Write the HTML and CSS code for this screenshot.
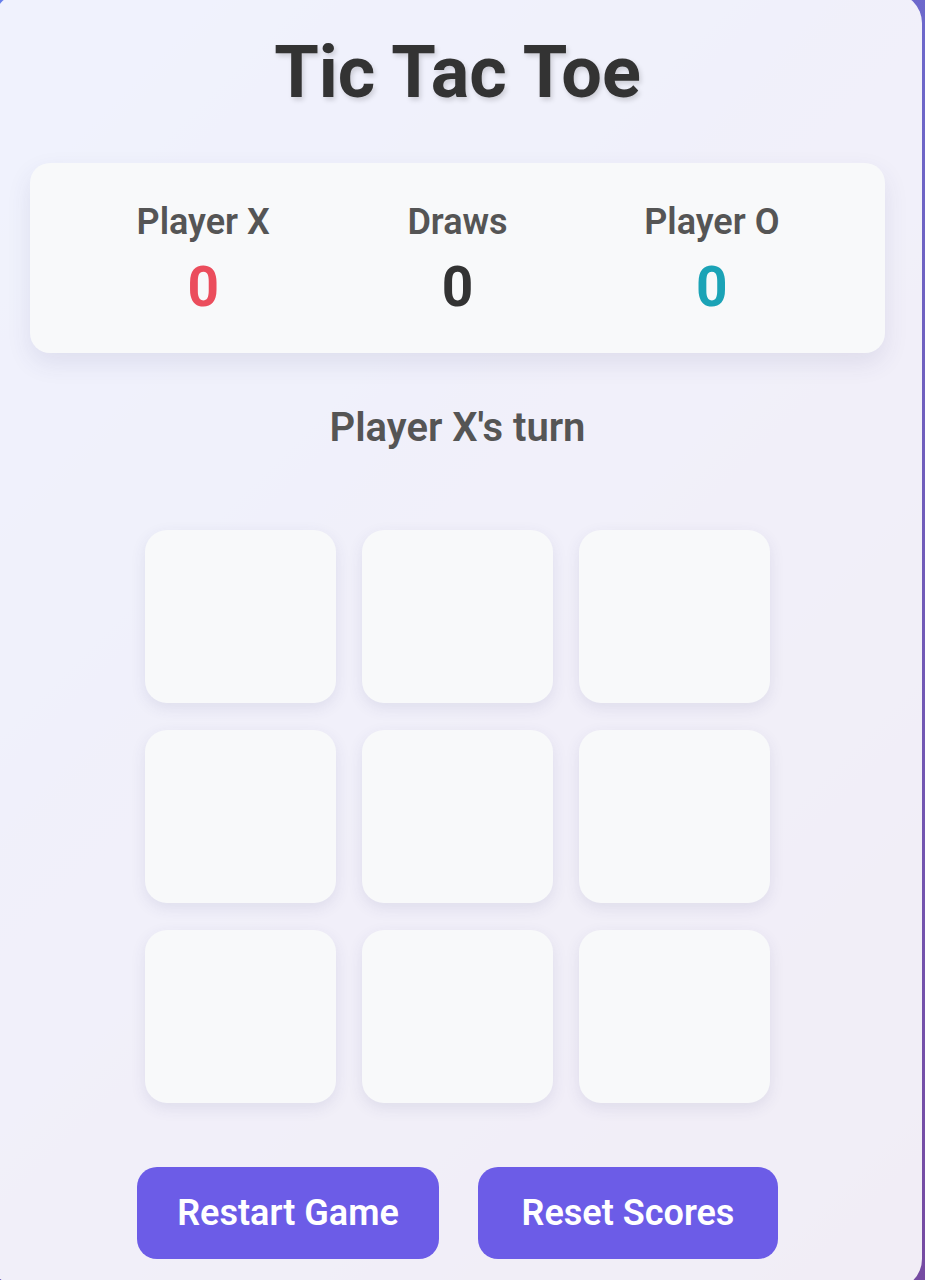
FILE: index.html
```html
<!DOCTYPE html>
<html lang="en">
<head>
<meta charset="utf-8">
<title>Tic Tac Toe</title>
<link rel="stylesheet" href="styles.css">
</head>
<body>
<main class="card">
  <h1 class="title">Tic Tac Toe</h1>
  <section class="scores">
    <div class="score-col">
      <div class="score-label">Player X</div>
      <div class="score-value score-x">0</div>
    </div>
    <div class="score-col">
      <div class="score-label">Draws</div>
      <div class="score-value score-draw">0</div>
    </div>
    <div class="score-col">
      <div class="score-label">Player O</div>
      <div class="score-value score-o">0</div>
    </div>
  </section>
  <p class="status">Player X's turn</p>
  <div class="board">
    <button class="cell"></button>
    <button class="cell"></button>
    <button class="cell"></button>
    <button class="cell"></button>
    <button class="cell"></button>
    <button class="cell"></button>
    <button class="cell"></button>
    <button class="cell"></button>
    <button class="cell"></button>
  </div>
  <div class="actions">
    <button class="btn btn-restart">Restart Game</button>
    <button class="btn btn-reset">Reset Scores</button>
  </div>
</main>
</body>
</html>
```
FILE: styles.css
```css
html, body {
  margin: 0;
  padding: 0;
}
body {
  width: 925px;
  height: 1280px;
  overflow: hidden;
  background: linear-gradient(135deg, #667eea 0%, #764ba2 100%);
  font-family: Roboto, "Noto Sans", sans-serif;
}
.card {
  box-sizing: border-box;
  width: 929px;
  height: 1296px;
  margin: -7px 0 0 -7px;
  background: rgba(255, 255, 255, 0.9);
  border-radius: 30px;
  display: flex;
  flex-direction: column;
  align-items: center;
  padding-top: 37px;
}
.title {
  margin: 0;
  font-size: 72px;
  line-height: 86px;
  font-weight: 700;
  color: #333333;
  text-shadow: 2px 3px 5px rgba(0, 0, 0, 0.15);
}
.scores {
  box-sizing: border-box;
  margin-top: 47px;
  width: 855px;
  height: 190px;
  background: #f8f9fa;
  border-radius: 20px;
  box-shadow: 0 10px 25px rgba(60, 60, 120, 0.1);
  display: grid;
  grid-template-columns: repeat(3, 1fr);
  padding: 38px 46px 0;
}
.score-col {
  display: flex;
  flex-direction: column;
  align-items: center;
}
.score-label {
  font-size: 36px;
  line-height: 43px;
  font-weight: 600;
  color: #555555;
}
.score-value {
  margin-top: 10px;
  font-size: 55px;
  line-height: 66px;
  font-weight: 700;
}
.score-x { color: #eb4d5c; }
.score-draw { color: #333333; }
.score-o { color: #1ba3b6; }
.status {
  margin: 51px 0 0;
  font-size: 40px;
  line-height: 47px;
  font-weight: 600;
  color: #555555;
}
.board {
  margin-top: 79px;
  display: grid;
  grid-template-columns: repeat(3, 191px);
  grid-template-rows: repeat(3, 173px);
  column-gap: 26px;
  row-gap: 27px;
}
.cell {
  border: none;
  padding: 0;
  background: #f8f9fa;
  border-radius: 22px;
  box-shadow: 0 5px 15px rgba(60, 60, 120, 0.1);
}
.actions {
  margin-top: 64px;
  display: flex;
  gap: 39px;
}
.btn {
  height: 92px;
  border: none;
  border-radius: 20px;
  background: #6c5ce7;
  color: #ffffff;
  font-family: Roboto, "Noto Sans", sans-serif;
  font-size: 36px;
  font-weight: 600;
  padding: 0;
}
.btn-restart { width: 302px; }
.btn-reset { width: 300px; }
```
